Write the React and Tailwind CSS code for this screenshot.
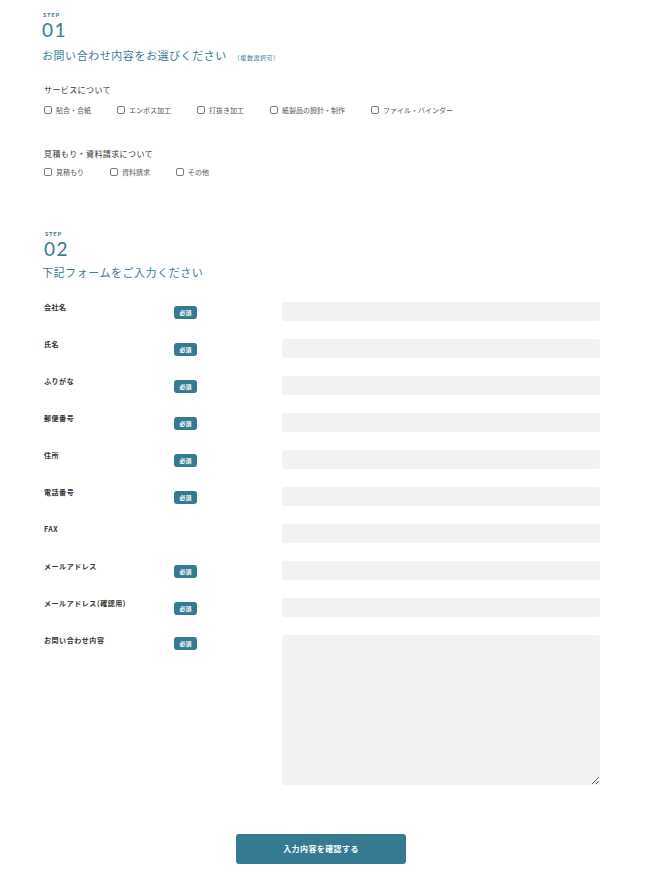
import React from "react";

const jp = { fontFamily: '"Noto Sans CJK JP", "Noto Sans", sans-serif' };
const num = { fontFamily: 'Lato, "Noto Sans", sans-serif' };

const services = ["貼合・合紙", "エンボス加工", "打抜き加工", "紙製品の設計・制作", "ファイル・バインダー"];
const requests = ["見積もり", "資料請求", "その他"];

const fields = [
  { label: "会社名", required: true },
  { label: "氏名", required: true },
  { label: "ふりがな", required: true },
  { label: "郵便番号", required: true },
  { label: "住所", required: true },
  { label: "電話番号", required: true },
  { label: "FAX", required: false },
  { label: "メールアドレス", required: true },
  { label: "メールアドレス(確認用)", required: true },
];

function Step({ n, className = "" }) {
  return (
    <div className={`text-[#3b7c97] ${className}`} style={num}>
      <p className="mb-[2px] ml-[1px] text-[6px] leading-[6px] font-bold tracking-[0.12em]">STEP</p>
      <p className="text-[19px] leading-[20px] tracking-[0.08em]">{n}</p>
    </div>
  );
}

function Check({ label }) {
  return (
    <label className="flex items-center gap-[4px] text-[7px] leading-[12px] text-[#555]">
      <span className="block h-[8px] w-[8px] rounded-[2px] border border-[#7a7a7a] bg-white" />
      {label}
    </label>
  );
}

function Badge({ className = "" }) {
  return (
    <span className={`flex h-[13px] w-[23px] items-center justify-center rounded-[3px] bg-[#367a92] text-[6px] font-bold text-white ${className}`}>
      必須
    </span>
  );
}

export default function App() {
  return (
    <div className="min-h-[872px] bg-white pl-[42px] pt-[12px] pb-[8px]" style={jp}>
      <div className="w-[558px]">
        <Step n="01" />
        <h2 className="mt-[8px] text-[11px] leading-[14px] tracking-[0.05em] text-[#3b7c97]">
          お問い合わせ内容をお選びください
          <span className="ml-[7px] text-[6px]">（複数選択可）</span>
        </h2>

        <p className="ml-[2px] mt-[20px] text-[8px] leading-[10px] tracking-[0.05em] text-[#333]">サービスについて</p>
        <div className="ml-[2px] mt-[9px] flex gap-[26px]">
          {services.map((s) => (
            <Check key={s} label={s} />
          ))}
        </div>

        <p className="ml-[2px] mt-[33px] text-[8px] leading-[10px] tracking-[0.05em] text-[#333]">見積もり・資料請求について</p>
        <div className="ml-[2px] mt-[7px] flex gap-[26px]">
          {requests.map((s) => (
            <Check key={s} label={s} />
          ))}
        </div>

        <Step n="02" className="mt-[53px] ml-[2px]" />
        <h2 className="mt-[6px] text-[11px] leading-[14px] tracking-[0.05em] text-[#3b7c97]">下記フォームをご入力ください</h2>

        <div className="ml-[2px] mt-[23px] flex flex-col gap-[18px]">
          {fields.map((f) => (
            <div key={f.label} className="grid grid-cols-[130px_108px_318px]">
              <p className="pt-[1px] text-[7px] leading-[8px] font-bold tracking-[0.08em] text-[#333]">{f.label}</p>
              <div>{f.required && <Badge className="mt-[4px]" />}</div>
              <input className="h-[19px] w-full rounded-[2px] bg-[#f2f2f2] outline-none" />
            </div>
          ))}
          <div className="grid grid-cols-[130px_108px_318px]">
            <p className="pt-[1px] text-[7px] leading-[8px] font-bold tracking-[0.08em] text-[#333]">お問い合わせ内容</p>
            <div>
              <Badge className="mt-[2px]" />
            </div>
            <textarea className="block h-[150px] w-full rounded-[2px] bg-[#f2f2f2] outline-none" />
          </div>
        </div>

        <div className="mt-[49px] flex justify-center">
          <button className="h-[30px] w-[170px] rounded-[3px] bg-[#367a92] text-[8px] font-bold tracking-[0.05em] text-white">
            入力内容を確認する
          </button>
        </div>
      </div>
    </div>
  );
}
